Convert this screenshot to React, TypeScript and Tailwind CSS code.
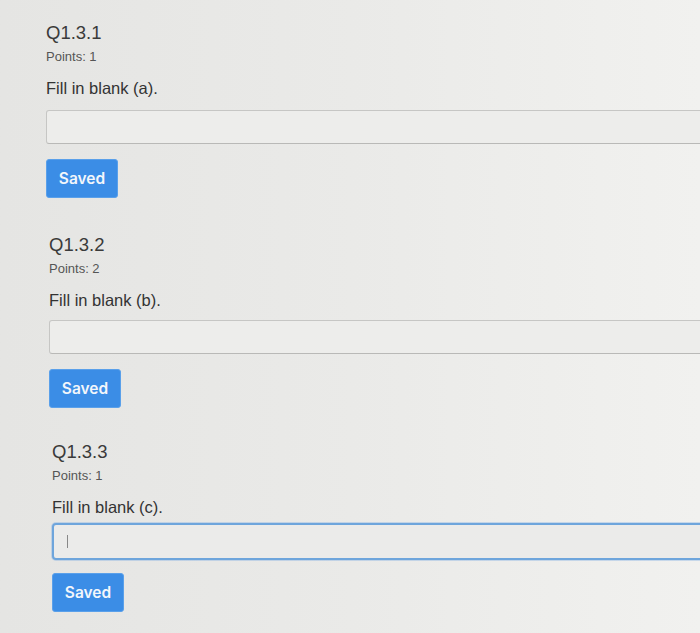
import React from 'react';

type Question = {
  id: string;
  points: number;
  prompt: string;
  focused?: boolean;
  box: string;
  field: string;
};

// the photo is slightly skewed, so each block sits a little further right
const questions: Question[] = [
  { id: 'Q1.3.1', points: 1, prompt: 'Fill in blank (a).', box: 'ml-[46px] pt-[21px]', field: 'mt-[12px]' },
  { id: 'Q1.3.2', points: 2, prompt: 'Fill in blank (b).', box: 'ml-[49px] pt-[35px]', field: 'mt-[10px]' },
  { id: 'Q1.3.3', points: 1, prompt: 'Fill in blank (c).', focused: true, box: 'ml-[52px] pt-[32px]', field: 'mt-[6px]' },
];

const QuestionBlock: React.FC<{ q: Question }> = ({ q }) => (
  <div className={q.box}>
    <h2 className="text-[18.5px] leading-6 text-[#3a3a3a] font-normal">{q.id}</h2>
    <div className="mt-1 text-[13px] leading-4 text-[#555]">Points: {q.points}</div>
    <p className="mt-[13px] text-[16.5px] leading-5 text-[#333]">{q.prompt}</p>
    {q.focused ? (
      <div className={`${q.field} h-[37px] w-[700px] rounded-[4px] border-2 border-[#6ea5dc] bg-[#ebebea] shadow-[0_0_0_1px_rgba(120,170,225,0.35)] flex items-center pl-[13px]`}>
        <span className="block h-[13px] w-px bg-[#888]" />
      </div>
    ) : (
      <input
        type="text"
        className={`${q.field} block h-[34px] w-[700px] rounded-[3px] border border-[#c6c6c4] border-b-[#b9b9b7] bg-[#ededeb] outline-none`}
      />
    )}
    <button
      className={`${q.focused ? 'mt-[13px]' : 'mt-[15px]'} block h-[39px] w-[72px] rounded-[3px] bg-[#3b8de6] border border-[#5aa0ea] text-[15.5px] font-semibold text-[#f2f6fb] [font-family:Inter,sans-serif]`}
    >
      Saved
    </button>
  </div>
);

const App: React.FC = () => {
  return (
    <div
      className="h-[633px] w-[700px] overflow-hidden bg-gradient-to-r from-[#e5e5e3] via-[#eaeae8] to-[#f1f1ef]"
      style={{ fontFamily: '"Liberation Sans", Arial, sans-serif' }}
    >
      {questions.map((q) => (
        <QuestionBlock key={q.id} q={q} />
      ))}
    </div>
  );
};

export default App;
